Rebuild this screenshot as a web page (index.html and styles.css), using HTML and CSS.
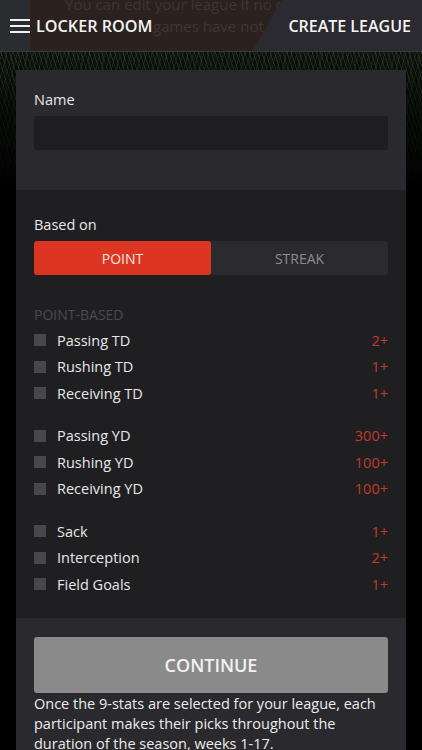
FILE: index.html
```html
<!DOCTYPE html>
<html lang="en">
    <head>
        <meta charset="utf-8" />
        <meta name="viewport" content="width=device-width, initial-scale=1.0">
        <title>Create League</title>
        <link rel="stylesheet" href="styles.css">
    </head>
    <body>
        <header class="topbar">
            <div class="toast">
                <p class="toast-1">You can edit your league if no one has joined</p>
                <p class="toast-2">games have not started yet.</p>
            </div>
            <div class="nav-left">
                <svg class="burger" width="20" height="14" viewBox="0 0 20 14">
                    <rect x="0" y="0" width="20" height="2" fill="#f2f2f2"/>
                    <rect x="0" y="6" width="20" height="2" fill="#f2f2f2"/>
                    <rect x="0" y="12" width="20" height="2" fill="#f2f2f2"/>
                </svg>
                <span>LOCKER ROOM</span>
            </div>
            <div class="nav-right">CREATE LEAGUE</div>
        </header>

        <main class="card">
            <section class="sec sec-name">
                <label class="label">Name</label>
                <div class="input"></div>
            </section>

            <section class="sec sec-rules">
                <label class="label">Based on</label>
                <div class="segment">
                    <div class="seg seg-on">POINT</div>
                    <div class="seg">STREAK</div>
                </div>

                <div class="group-title">POINT-BASED</div>

                <ul class="stats">
                    <li><i class="box"></i><span class="name">Passing TD</span><span class="val">2+</span></li>
                    <li><i class="box"></i><span class="name">Rushing TD</span><span class="val">1+</span></li>
                    <li><i class="box"></i><span class="name">Receiving TD</span><span class="val">1+</span></li>
                </ul>
                <ul class="stats">
                    <li><i class="box"></i><span class="name">Passing YD</span><span class="val">300+</span></li>
                    <li><i class="box"></i><span class="name">Rushing YD</span><span class="val">100+</span></li>
                    <li><i class="box"></i><span class="name">Receiving YD</span><span class="val">100+</span></li>
                </ul>
                <ul class="stats">
                    <li><i class="box"></i><span class="name">Sack</span><span class="val">1+</span></li>
                    <li><i class="box"></i><span class="name">Interception</span><span class="val">2+</span></li>
                    <li><i class="box"></i><span class="name">Field Goals</span><span class="val">1+</span></li>
                </ul>
            </section>

            <section class="sec sec-foot">
                <button class="continue">CONTINUE</button>
                <p class="note">Once the 9-stats are selected for your league, each participant makes their picks throughout the duration of the season, weeks 1-17.</p>
            </section>
        </main>
    </body>
</html>
```

FILE: styles.css
```css
* {
    box-sizing: border-box;
}

body {
    margin: 0;
    height: 750px;
    overflow: hidden;
    font-family: "Open Sans", "Liberation Sans", sans-serif;
    color: #e6e6e6;
    background-color: #000;
    background-image:
        linear-gradient(to bottom, rgba(0,0,0,0) 50px, rgba(0,0,0,0.6) 110px, #000 190px),
        repeating-linear-gradient(72deg, rgba(70,95,65,0.35) 0 1px, transparent 1px 4px),
        repeating-linear-gradient(105deg, rgba(45,65,45,0.45) 0 1px, transparent 1px 5px),
        repeating-linear-gradient(88deg, rgba(20,30,20,0.6) 0 2px, transparent 2px 7px),
        linear-gradient(#0c110c, #0c110c);
}

/* top bar */
.topbar {
    position: relative;
    height: 52px;
    background: #2b2c30;
    border-bottom: 1px solid #38383c;
    display: flex;
    align-items: center;
    justify-content: space-between;
    overflow: hidden;
}

/* message sliding in behind the bar */
.toast {
    position: absolute;
    left: 30px;
    top: 0;
    width: 254px;
    height: 51px;
    background: #2b211f;
    font-size: 15px;
    color: #403634;
    overflow: hidden;
}

.toast p {
    margin: 0;
    white-space: nowrap;
    line-height: 22px;
}

.toast-1 {
    margin-top: -7px !important;
    padding-left: 35px;
}

.toast-2 {
    padding-left: 123px;
}

.nav-left {
    position: relative;
    display: flex;
    align-items: center;
    gap: 6px;
    padding-left: 10px;
    font-size: 16.2px;
    font-weight: 600;
    color: #f4f4f4;
}

.burger {
    display: block;
}

.nav-right {
    position: relative;
    width: 170px;
    height: 51px;
    display: flex;
    align-items: center;
    justify-content: flex-end;
    padding-right: 11px;
    font-size: 16px;
    font-weight: 600;
    color: #f4f4f4;
    background: #2a2a30;
    clip-path: polygon(30px 0, 100% 0, 100% 100%, 0 100%);
}

/* card */
.card {
    margin: 18px 16px 0;
}

.sec {
    padding: 0 18px;
}

.label {
    display: block;
    font-size: 14.5px;
    line-height: 20px;
    color: #e8e8e8;
}

.sec-name {
    background: #2a2a2e;
    padding-top: 20px;
    height: 120px;
}

.input {
    margin-top: 6px;
    height: 34px;
    background: #1e1e21;
    border-radius: 2px;
}

.sec-rules {
    background: #1f1f22;
    padding-top: 25px;
    height: 428px;
}

.segment {
    display: flex;
    margin-top: 6px;
    height: 34px;
    background: #2b2b2f;
    border-radius: 3px;
}

.seg {
    flex: 1;
    display: flex;
    align-items: center;
    justify-content: center;
    font-size: 14px;
    color: #8c8c90;
}

.seg-on {
    background: #dc3522;
    color: #f6e6e2;
    border-radius: 3px;
}

.group-title {
    margin-top: 30px;
    margin-bottom: 2px;
    font-size: 14px;
    line-height: 20px;
    color: #4a4a4e;
}

.stats {
    list-style: none;
    margin: 0 0 16px;
    padding: 0;
}

.stats li {
    display: flex;
    align-items: center;
    height: 26.5px;
    font-size: 14.5px;
}

.box {
    width: 12px;
    height: 12px;
    background: #48484c;
    margin-right: 11px;
}

.name {
    flex: 1;
    color: #e8e8e8;
}

.val {
    color: #c23a2c;
}

.sec-foot {
    background: #2a2a2e;
    padding-top: 19px;
    height: 140px;
}

.continue {
    display: block;
    width: 100%;
    height: 56px;
    border: none;
    border-radius: 3px;
    background: #8a8a8a;
    color: #f2f2f2;
    font-family: inherit;
    font-size: 18px;
    font-weight: 600;
}

.note {
    margin: 1px 0 0;
    font-size: 14.5px;
    line-height: 20px;
    color: #ececec;
}
```
